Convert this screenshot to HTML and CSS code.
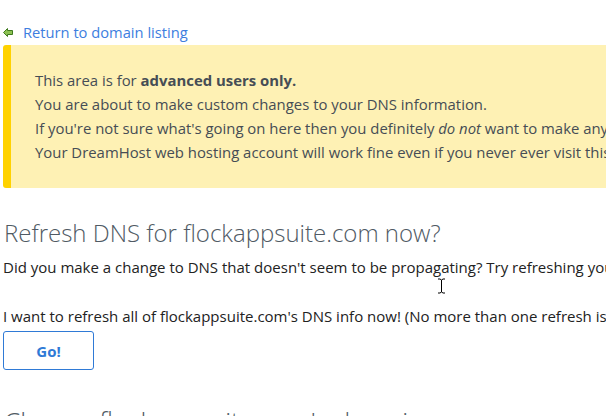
FILE: index.html
```html
<!DOCTYPE html>
<html>
<head>
<meta charset="utf-8">
<link rel="stylesheet" href="styles.css">
</head>
<body>
<div class="page">
  <a class="back" href="#">
    <svg class="back-icon" width="10" height="9" viewBox="0 0 10 9"><path d="M0.5 4.5 L4.5 0.5 L4.5 2.5 L9.5 2.5 L9.5 6.5 L4.5 6.5 L4.5 8.5 Z" fill="#8cc152" stroke="#3f7a1e" stroke-width="1"/></svg>
    <span>Return to domain listing</span>
  </a>
  <div class="notice">
    <p>This area is for <b>advanced users only.</b></p>
    <p>You are about to make custom changes to your DNS information.</p>
    <p>If you're not sure what's going on here then you definitely <i>do not</i> want to make any changes here!</p>
    <p>Your DreamHost web hosting account will work fine even if you never ever visit this page!</p>
  </div>
  <h2 class="title">Refresh DNS for flockappsuite.com now?</h2>
  <p class="text">Did you make a change to DNS that doesn't seem to be propagating? Try refreshing your DNS!</p>
  <p class="text spaced">I want to refresh all of flockappsuite.com's DNS info now! (No more than one refresh is allowed per hour.)</p>
  <button class="go">Go!</button>
  <h2 class="title next">Change flockappsuite.com's domain</h2>
</div>
<svg class="cursor" width="9" height="16" viewBox="0 0 9 16"><path d="M1 1 H3 L4.5 2 L6 1 H8 M4.5 2 V14 M1 15 H3 L4.5 14 L6 15 H8" fill="none" stroke="#000" stroke-width="1"/></svg>
</body>
</html>
```
FILE: styles.css
```css
html, body {
  margin: 0;
  padding: 0;
  background: #fff;
  overflow: hidden;
}
body {
  width: 606px;
  height: 416px;
  position: relative;
  font-family: "Open Sans", "Liberation Sans", sans-serif;
}
.page {
  padding: 21px 0 0 3px;
  width: 900px;
}
.back {
  display: flex;
  align-items: center;
  gap: 10px;
  text-decoration: none;
  color: #3d7ee0;
  font-size: 14.7px;
  line-height: 22px;
  height: 22px;
}
.back-icon {
  margin-top: 1px;
}
.notice {
  margin-top: 2px;
  background: #fef1b4;
  border-left: 8px solid #ffd200;
  border-radius: 3px 0 0 3px;
  padding: 23px 0 24px 24px;
  color: #464d55;
  font-size: 14.9px;
  line-height: 24px;
}
.notice p {
  margin: 0;
  white-space: nowrap;
}
.notice b {
  font-weight: 700;
}
.title {
  margin: 30px 0 0 1px;
  font-weight: 300;
  font-size: 24px;
  line-height: 30px;
  color: #505a64;
  white-space: nowrap;
}
.text {
  margin: 7px 0 0 0;
  font-size: 15px;
  line-height: 24px;
  color: #222;
  white-space: nowrap;
}
.text.spaced {
  margin-top: 25px;
}
.go {
  display: block;
  margin-top: 3px;
  width: 91px;
  height: 39px;
  background: #fff;
  border: 1px solid #2f7ad6;
  border-radius: 3px;
  color: #2f7ad6;
  font-family: "Open Sans", "Liberation Sans", sans-serif;
  font-weight: 700;
  font-size: 15px;
  padding: 0;
}
.title.next {
  margin-top: 36px;
  font-size: 26px;
}
.cursor {
  position: absolute;
  left: 437px;
  top: 278px;
}
```
